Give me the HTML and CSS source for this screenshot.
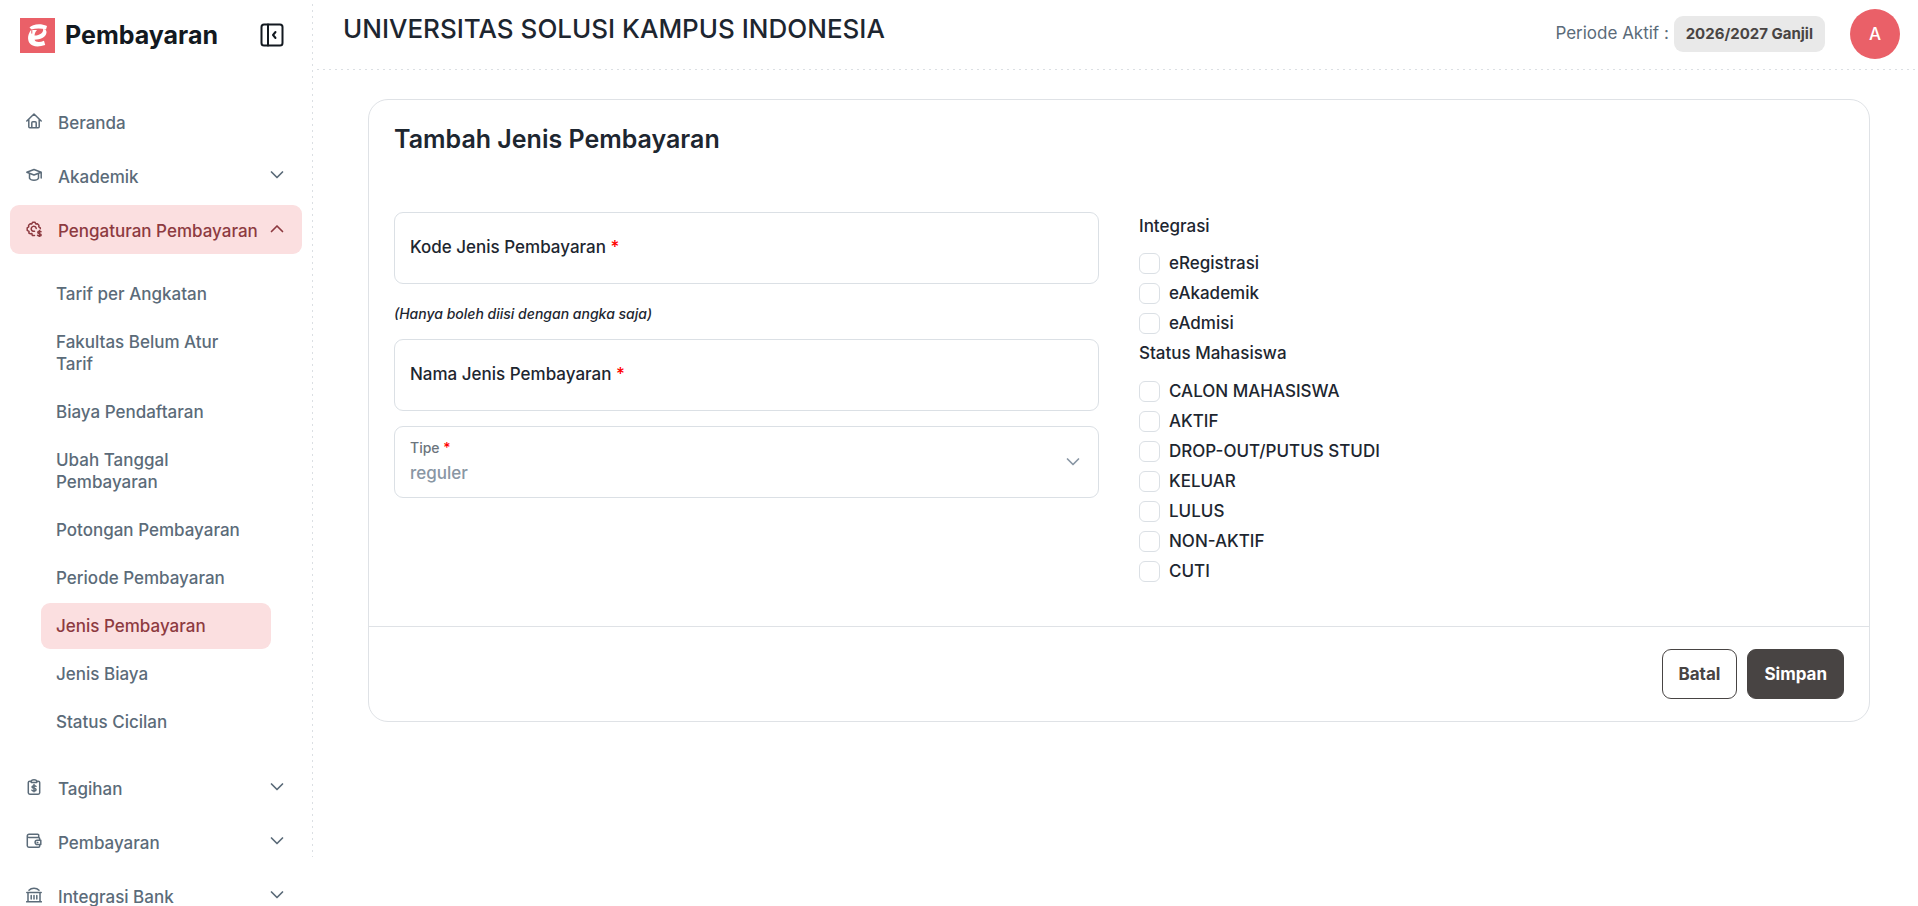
FILE: index.html
```html
<!DOCTYPE html>
<html lang="id">
<head>
<meta charset="utf-8">
<title>Tambah Jenis Pembayaran</title>
<link rel="stylesheet" href="styles.css">
</head>
<body>
<svg class="sprite" aria-hidden="true">
  <symbol id="chev-down" viewBox="0 0 14 14"><path d="M1.500 4 7 9.500 12.500 4"/></symbol>
  <symbol id="chev-up" viewBox="0 0 14 14"><path d="M1.500 9.500 7 4 12.500 9.500"/></symbol>
</svg>
<div class="app">
  <aside class="sidebar">
    <div class="brand">
      <svg class="brand-logo" viewBox="0 0 35 35" aria-hidden="true">
        <rect width="35" height="35" fill="#ea6068"/>
        <path d="M9.500 9.500C12 6.500 20 4.500 27 8L26 11.500C21 10 16 10 11.500 11.500Z" fill="#fff"/>
        <path d="M11 12C8 16 7 21 9.500 25C12 28.800 18.500 29.300 25.200 27L24 22.700C20 24.500 15.500 24.500 14.500 21.700C20 21.700 26 19.500 26.500 14.500C26.700 12.500 25.500 11 23 10.900C24 14 20 17.500 14.500 17.600C14.700 15.500 15.500 13.500 17 12Z" fill="#fff"/>
        <path d="M11.800 12.200v3" stroke="#ea6068" stroke-width="1"/>
      </svg>
      <span class="brand-name">Pembayaran</span>
      <button class="icon-button" type="button" aria-label="Tutup menu">
        <svg viewBox="0 0 24 24" width="24" height="24" aria-hidden="true"><rect x="1.500" y="1.500" width="21" height="21" rx="2.500"/><path d="M8 1.500v21M15.500 9 13 12l2.500 3"/></svg>
      </button>
    </div>
    <nav class="menu">
      <a class="menu-item" href="#">
        <svg class="menu-icon" viewBox="0 0 16 16" aria-hidden="true"><path d="M.8 8 8 1l7.200 7M2.800 6.500v7.200c0 .6.400 1 1 1h8.400c.6 0 1-.4 1-1V6.500M5.800 14.500V9.800c0-.6.400-1 1-1h2.400c.6 0 1 .4 1 1v4.700"/></svg>
        <span class="menu-text">Beranda</span>
      </a>
      <a class="menu-item" href="#">
        <svg class="menu-icon" viewBox="0 0 16 16" aria-hidden="true"><path d="M.8 5.200 8 2.500l7.200 2.700L8 8ZM3.500 6.500v4.700c1.200 2.700 7.800 2.700 9 0V6.500M15.200 5.200V11"/></svg>
        <span class="menu-text">Akademik</span>
        <svg class="menu-arrow" aria-hidden="true"><use href="#chev-down"/></svg>
      </a>
      <a class="menu-item active" href="#">
        <svg class="menu-icon" viewBox="0 0 16 16" aria-hidden="true"><path d="M8.500 14.400H6.300L5.900 12.600 4.400 12.800 2.900 12 3 10.300 1.200 9.300V6.800L2.700 5.900 2.600 4.200 4.200 2.700 5.800 2.900 6.600 1.200H8.900L9.800 2.900 11.400 2.700 12.900 4.200 12.800 5.900 14.300 6.800V7.800M8.500 10.200A2.500 2.500 0 1 1 10.200 7.400M15 10.700C14.300 9.900 11.800 10 11.800 11.400C11.800 13 15.200 12.200 15.200 13.900C15.200 15.200 12.400 15.200 11.600 14.300M13.500 9.400v6.400"/></svg>
        <span class="menu-text">Pengaturan Pembayaran</span>
        <svg class="menu-arrow" aria-hidden="true"><use href="#chev-up"/></svg>
      </a>
      <div class="submenu">
        <a class="submenu-item" href="#">Tarif per Angkatan</a>
        <a class="submenu-item" href="#">Fakultas Belum Atur Tarif</a>
        <a class="submenu-item" href="#">Biaya Pendaftaran</a>
        <a class="submenu-item" href="#">Ubah Tanggal Pembayaran</a>
        <a class="submenu-item" href="#">Potongan Pembayaran</a>
        <a class="submenu-item" href="#">Periode Pembayaran</a>
        <a class="submenu-item active" href="#">Jenis Pembayaran</a>
        <a class="submenu-item" href="#">Jenis Biaya</a>
        <a class="submenu-item" href="#">Status Cicilan</a>
      </div>
      <a class="menu-item" href="#">
        <svg class="menu-icon" viewBox="0 0 16 16" aria-hidden="true"><path d="M5 2.200H3.800c-.9 0-1.500.6-1.500 1.400v10.200c0 .8.600 1.400 1.500 1.400h8.400c.9 0 1.500-.6 1.500-1.400V3.600c0-.8-.6-1.400-1.500-1.400H11M5.200 3.600v-1C5.200 1.500 6.500.8 8 .8s2.800.7 2.800 1.800v1ZM10 7.400C9.300 6.300 6 6.400 6 8c0 1.800 4.100.9 4.100 2.800 0 1.600-3.400 1.600-4.200.4M8 5.600v7.200"/></svg>
        <span class="menu-text">Tagihan</span>
        <svg class="menu-arrow" aria-hidden="true"><use href="#chev-down"/></svg>
      </a>
      <a class="menu-item" href="#">
        <svg class="menu-icon" viewBox="0 0 16 16" aria-hidden="true"><path d="M12.700 4.700V2.200c0-.6-.4-1-1-1H3C2 1.200 1.300 2 1.300 2.900S2 4.600 3 4.600h9.500c.8 0 1.200.5 1.200 1.200v1.400M1.300 3v9.800c0 .9.600 1.400 1.500 1.400h9.700c.8 0 1.200-.5 1.200-1.200v-1.500M14.800 7.300h-3.600a2.100 2.100 0 0 0 0 4.200h3.600ZM11.200 9.400h.6"/></svg>
        <span class="menu-text">Pembayaran</span>
        <svg class="menu-arrow" aria-hidden="true"><use href="#chev-down"/></svg>
      </a>
      <a class="menu-item" href="#">
        <svg class="menu-icon" viewBox="0 0 16 16" aria-hidden="true"><path d="M3 3.300C5.500.6 10.500.6 13 3.300M.8 5.600h14.400M2 5.600v9M14 5.600v9M.6 14.800h14.800M5.200 8.500v3.500M8 8.500v3.500M10.800 8.500v3.500"/></svg>
        <span class="menu-text">Integrasi Bank</span>
        <svg class="menu-arrow" aria-hidden="true"><use href="#chev-down"/></svg>
      </a>
    </nav>
  </aside>

  <div class="page">
    <header class="topbar">
      <h1 class="campus">UNIVERSITAS SOLUSI KAMPUS INDONESIA</h1>
      <div class="topbar-side">
        <span class="period">Periode Aktif : <span class="badge">2026/2027 Ganjil</span></span>
        <button class="avatar" type="button">A</button>
      </div>
    </header>
    <main class="content">
      <form class="card">
        <h2 class="card-title">Tambah Jenis Pembayaran</h2>
        <div class="card-body">
          <div class="fields">
            <div class="field">
              <input class="field-input" id="kode" type="text">
              <label class="field-label" for="kode">Kode Jenis Pembayaran <span class="required">*</span></label>
            </div>
            <p class="hint">(Hanya boleh diisi dengan angka saja)</p>
            <div class="field">
              <input class="field-input" id="nama" type="text">
              <label class="field-label" for="nama">Nama Jenis Pembayaran <span class="required">*</span></label>
            </div>
            <div class="field">
              <select class="field-select" id="tipe" disabled><option>reguler</option></select>
              <label class="field-label floated" for="tipe">Tipe <span class="required">*</span></label>
              <svg class="field-arrow" aria-hidden="true"><use href="#chev-down"/></svg>
            </div>
          </div>
          <div class="options">
            <fieldset class="group">
              <legend class="group-title">Integrasi</legend>
              <label class="check"><input type="checkbox">eRegistrasi</label>
              <label class="check"><input type="checkbox">eAkademik</label>
              <label class="check"><input type="checkbox">eAdmisi</label>
            </fieldset>
            <fieldset class="group">
              <legend class="group-title">Status Mahasiswa</legend>
              <label class="check"><input type="checkbox">CALON MAHASISWA</label>
              <label class="check"><input type="checkbox">AKTIF</label>
              <label class="check"><input type="checkbox">DROP-OUT/PUTUS STUDI</label>
              <label class="check"><input type="checkbox">KELUAR</label>
              <label class="check"><input type="checkbox">LULUS</label>
              <label class="check"><input type="checkbox">NON-AKTIF</label>
              <label class="check"><input type="checkbox">CUTI</label>
            </fieldset>
          </div>
        </div>
        <div class="card-footer">
          <button class="btn btn-outline" type="button">Batal</button>
          <button class="btn btn-solid" type="submit">Simpan</button>
        </div>
      </form>
    </main>
  </div>
</div>
</body>
</html>
```
FILE: styles.css
```css
* { box-sizing: border-box; }

body {
  margin: 0;
  overflow: hidden;
  background: #fff;
  color: #1d2630;
  font: 500 17px/22px Inter, sans-serif;
}

h1, h2, p { margin: 0; }
a { color: inherit; text-decoration: none; }
button, input, select { font: inherit; color: inherit; }
svg { flex: none; fill: none; stroke: currentColor; stroke-linecap: round; stroke-linejoin: round; }

.sprite { position: absolute; width: 0; height: 0; }

.app {
  display: grid;
  grid-template-columns: 313px 1fr;
  height: 100vh;
}

/* Sidebar, with a dashed rule down its right edge */
.sidebar {
  height: calc(100vh - 49px);
  background: repeating-linear-gradient(to bottom, transparent 0 4px, #dbdfe3 4px 6px) right / 1px 100% no-repeat;
}

.brand {
  display: flex;
  align-items: center;
  height: 70px;
  padding: 0 29px 0 20px;
}
.brand-logo { width: 35px; height: 35px; stroke: none; }
.brand-name {
  flex: 1;
  margin-left: 10px;
  color: #131920;
  font-size: 25px;
  font-weight: 700;
}
.icon-button {
  display: flex;
  padding: 0;
  border: 0;
  background: none;
  color: #131920;
  stroke-width: 2;
}

.menu {
  display: flex;
  flex-direction: column;
  gap: 5px;
  padding: 27px 11px 0 10px;
  color: #5b6b79;
}
.menu-item {
  display: flex;
  align-items: center;
  height: 49px;
  padding: 0 18px 2px 16px;
  border-radius: 9px;
}
.menu-text { padding-top: 4px; }
.menu-icon { width: 16px; height: 16px; margin-right: 16px; stroke-width: 1.5; }
.menu-arrow { width: 14px; height: 14px; margin-left: auto; stroke-width: 1.700; }
.active { background: #fbdfe0; color: #8d3a40; }

.submenu {
  display: flex;
  flex-direction: column;
  gap: 2px;
  padding: 12px 31px 13px;
}
.submenu-item { padding: 12px 15px; border-radius: 9px; }

/* Top bar */
.topbar {
  display: flex;
  justify-content: space-between;
  height: 70px;
  padding: 9px 18px 0 30px;
  background: repeating-linear-gradient(to right, transparent 0 4px, #dbdfe3 4px 6px) bottom / 100% 1px no-repeat;
}
.campus { font-size: 26px; line-height: 40px; font-weight: 500; }
.topbar-side { display: flex; gap: 25px; }
.period { line-height: 48px; color: #5b6b79; font-weight: 400; }
.badge {
  display: inline-block;
  padding: 0 12px;
  border-radius: 9px;
  background: #e9e9e9;
  color: #484443;
  font-size: 15px;
  line-height: 36px;
  font-weight: 700;
}
.avatar {
  width: 50px;
  height: 50px;
  padding: 0;
  border: 0;
  border-radius: 50%;
  background: #ea6068;
  color: #fff;
}

/* Form card */
.content { padding: 29px 48px 0 55px; }
.card { border: 1px solid #dfe2e6; border-radius: 20px; }
.card-title {
  padding: 23px 25px 0;
  font-size: 25px;
  line-height: 32px;
  font-weight: 600;
}
.card-body {
  display: grid;
  grid-template-columns: 1fr 1fr;
  gap: 40px;
  padding: 57px 25px 40px;
}

.fields { display: flex; flex-direction: column; }
.field {
  display: grid;
  align-items: center;
  height: 72px;
  border: 1px solid #dbe0e5;
  border-radius: 9px;
}
.field > * { grid-area: 1 / 1; }
.field + .field { margin-top: 15px; }
.field-input, .field-select {
  width: 100%;
  height: 100%;
  padding: 22px 15px 0;
  border: 0;
  border-radius: 9px;
  background: none;
}
.field-select { appearance: none; color: #8996a4; opacity: 1; }
.field-label { padding: 0 15px 2px; pointer-events: none; }
.floated { align-self: start; padding-top: 10px; font-size: 14px; color: #6c757d; }
.field-arrow {
  justify-self: end;
  width: 14px;
  height: 14px;
  margin-right: 18px;
  color: #8996a4;
  stroke-width: 1.700;
  pointer-events: none;
}
.required { color: #f00; }
.hint { padding: 21px 0 17px; font-size: 14px; line-height: 17px; font-style: italic; }

.group { margin: 0; padding: 0; border: 0; }
.group-title { padding: 3px 0 11px; }
.group + .group .group-title { padding: 4px 0 12px; }
.check { display: flex; align-items: center; height: 30px; }
.check input {
  appearance: none;
  width: 21px;
  height: 21px;
  margin: 0 9px 0 0;
  border: 1px solid #dbe0e5;
  border-radius: 6px;
  background: #fff;
}
.check input:checked { background: #484443; }

.card-footer {
  display: flex;
  justify-content: flex-end;
  gap: 10px;
  padding: 22px 25px;
  border-top: 1px solid #dfe2e6;
}
.btn {
  height: 50px;
  padding: 0 16px;
  border: 1px solid #484443;
  border-radius: 9px;
  font-weight: 700;
}
.btn-outline { background: #fff; color: #484443; }
.btn-solid { background: #484443; color: #fff; }
```
